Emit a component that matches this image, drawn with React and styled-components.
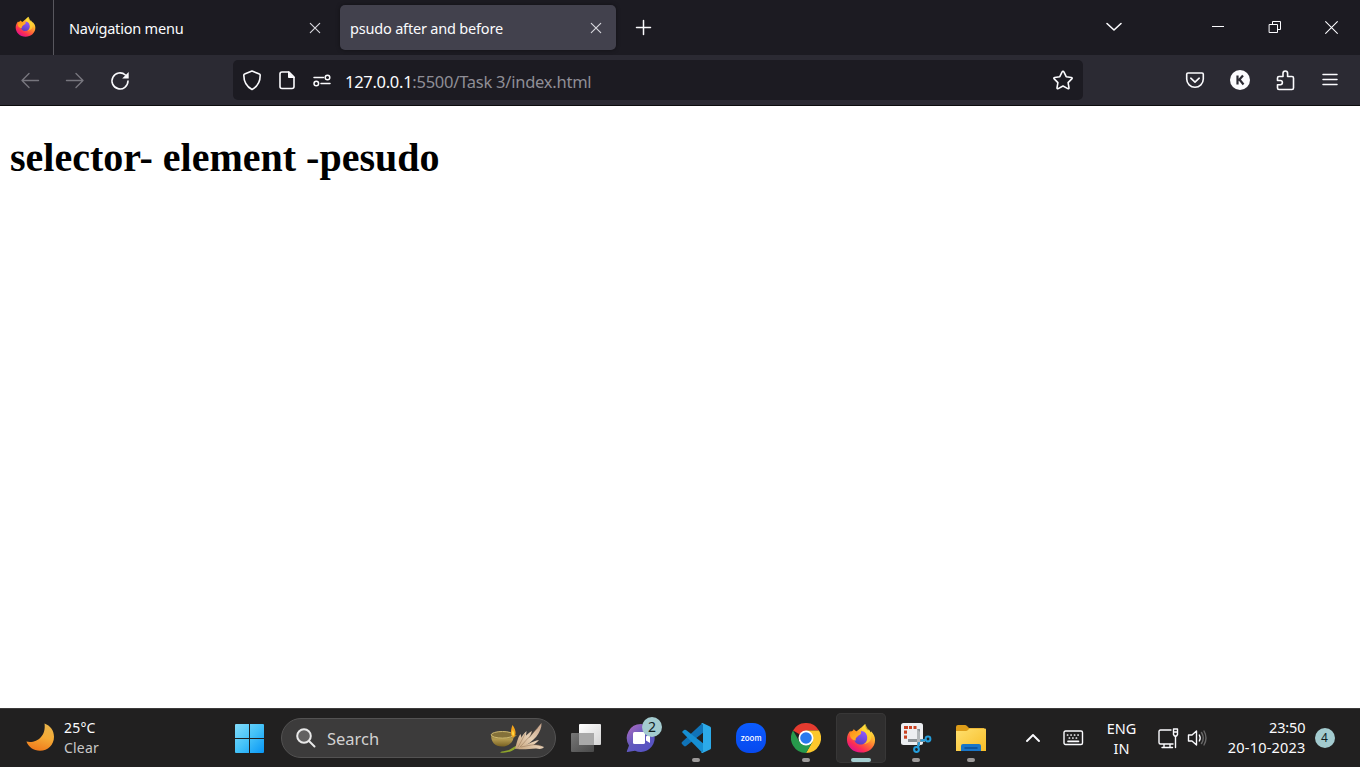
import React from "react";
import styled, { createGlobalStyle } from "styled-components";

const GlobalStyle = createGlobalStyle`
  * { box-sizing: border-box; }
  body {
    margin: 0;
    overflow: hidden;
    background: #fff;
    font-family: "Noto Sans", "Open Sans", sans-serif;
  }
  svg { display: block; flex: none; }
`;

const Screen = styled.div`
  display: flex;
  flex-direction: column;
  width: 1360px;
  height: 767px;
`;

const Label = styled.span`
  font-size: ${(p) => p.$size}px;
  line-height: ${(p) => p.$line || 20}px;
  letter-spacing: ${(p) => p.$track || 0}px;
  color: ${(p) => p.$color || "#fbfbfe"};
  white-space: pre;
`;

/* Browser chrome */
const TabStrip = styled.div`
  display: flex;
  flex: none;
  height: 55px;
  background: #1c1b22;
`;

const PinnedCell = styled.div`
  width: 54px;
  padding: 16px 0 0 15px;
  border-right: 1px solid #58575e;
`;

const Tab = styled.div`
  display: flex;
  align-items: center;
  justify-content: space-between;
  width: ${(p) => (p.$active ? 276 : 286)}px;
  height: 45px;
  margin-top: 5px;
  padding: ${(p) => (p.$active ? "0 14px 0 10px" : "0 19px 0 15px")};
  border-radius: 5px;
  background: ${(p) => (p.$active ? "#42414d" : "transparent")};
  box-shadow: ${(p) => (p.$active ? "0 0 4px rgba(0, 0, 0, 0.4)" : "none")};
`;

const NewTab = styled.div`
  padding: 19px 0 0 19px;
`;

const TabListButton = styled.div`
  display: flex;
  justify-content: center;
  width: 50px;
  margin: 17px 50px 0 auto;
`;

const WindowButton = styled.div`
  display: flex;
  justify-content: center;
  width: 57px;
  padding-top: 20px;
`;

const NavBar = styled.div`
  display: flex;
  flex: none;
  height: 51px;
  padding: 5px 7.5px;
  background: #2b2a33;
  border-bottom: 1px solid #0c0c0d;
`;

const NavButton = styled.div`
  display: flex;
  align-items: center;
  justify-content: center;
  width: 45px;
  height: 40px;
`;

const AddressBar = styled.div`
  display: flex;
  align-items: center;
  width: 850px;
  height: 40px;
  margin: 0 89.5px 0 90.5px;
  padding: 0 8px;
  border-radius: 5px;
  background: #1c1b22;
`;

const AddressIcons = styled.div`
  display: flex;
  gap: 11px;
  margin-right: 7px;
  padding-right: 4px;
  margin-left: -1px;
`;

const AddressText = styled.div`
  flex: 1;
  padding-top: 3px;
  line-height: 24px;
`;

const Page = styled.main`
  flex: 1;
  padding: 27px 10px 0;
  background: #fff;
`;

const Heading = styled.h1`
  margin: 0;
  font: bold 40px/50px "Liberation Serif", serif;
  color: #000;
  white-space: nowrap;
`;

/* Desktop taskbar */
const Taskbar = styled.footer`
  display: flex;
  flex: none;
  height: 59px;
  background: #212020;
  border-top: 1px solid #3c3b3b;
`;

const Weather = styled.div`
  display: flex;
  gap: 10px;
  width: 209px;
  padding: 9px 0 0 26px;
`;

const Lines = styled.div`
  display: flex;
  flex-direction: column;
  align-items: ${(p) => p.$align || "flex-start"};
`;

const MoonSlot = styled.div`
  padding-top: 5px;
`;

const StartButton = styled.div`
  width: 72px;
  padding: 15px 0 0 26px;
`;

const SearchBox = styled.div`
  display: flex;
  align-items: center;
  width: 275px;
  height: 40px;
  margin: 9px 2.5px 0 0;
  padding: 0 9px 0 14px;
  border: 1px solid #535252;
  border-radius: 20px;
  background: #3c3b3b;
`;

const SearchLabel = styled.div`
  flex: 1;
  padding: 2px 0 0 11px;
`;

const AppCell = styled.div`
  display: flex;
  justify-content: center;
  width: 55px;
  padding-top: 4px;
`;

const AppTile = styled.div`
  position: relative;
  display: flex;
  flex-direction: column;
  align-items: center;
  justify-content: space-between;
  width: 50px;
  height: 50px;
  padding: 0 0 1px;
  border-radius: 5px;
  background: ${(p) => (p.$active ? "#2f2e2e" : "transparent")};
  box-shadow: ${(p) => (p.$active ? "inset 0 0 0 1px #383737" : "none")};
`;

const AppGlyph = styled.div`
  display: flex;
  align-items: center;
  height: 32px;
  margin-top: 9px;
`;

const Indicator = styled.div`
  width: ${(p) => (p.$active ? 20 : 8)}px;
  height: 4px;
  border-radius: 2px;
  background: ${(p) => (p.$active ? "#a4cdd0" : "#9c9998")};
`;

const Count = styled.span`
  display: flex;
  align-items: center;
  justify-content: center;
  width: 20px;
  height: 20px;
  border-radius: 50%;
  background: #a3cbcf;
  color: #101c1e;
  font-size: ${(p) => p.$size || 14}px;
  line-height: 20px;
`;

const FloatingCount = styled(Count)`
  position: absolute;
  top: 4px;
  right: 4px;
`;

const Tray = styled.div`
  display: flex;
  flex: 1;
  padding-left: 27px;
`;

const TraySlot = styled.div`
  flex: none;
  width: ${(p) => p.$width}px;
  padding-top: ${(p) => p.$top}px;
`;

const Language = styled(Lines)`
  flex: none;
  width: 60px;
  margin-right: 6px;
  padding-top: 9px;
`;

const Clock = styled(Lines)`
  flex: none;
  width: 90px;
  margin-right: 9px;
  padding-top: 8px;
`;

function Icon({ w, h = w, box, children, ...rest }) {
  return (
    <svg width={w} height={h} viewBox={box || `0 0 ${w} ${h}`} fill="none" stroke="#fbfbfe" strokeWidth="1.6" strokeLinecap="round" strokeLinejoin="round" {...rest}>
      {children}
    </svg>
  );
}

function FirefoxLogo({ size, id }) {
  return (
    <Icon w={size} box="0 0 32 32" stroke="none">
      <defs>
        <linearGradient id={`${id}body`} x1="25" y1="3" x2="8" y2="29" gradientUnits="userSpaceOnUse">
          <stop stopColor="#fff44f" />
          <stop offset=".3" stopColor="#ffb82e" />
          <stop offset=".58" stopColor="#ff6b36" />
          <stop offset=".82" stopColor="#fb2c56" />
          <stop offset="1" stopColor="#e31587" />
        </linearGradient>
        <linearGradient id={`${id}globe`} x1="19" y1="9" x2="14" y2="23" gradientUnits="userSpaceOnUse">
          <stop stopColor="#9059ff" />
          <stop offset="1" stopColor="#5b3fbf" />
        </linearGradient>
        <linearGradient id={`${id}fox`} x1="5" y1="7" x2="17" y2="20" gradientUnits="userSpaceOnUse">
          <stop stopColor="#ff8a16" />
          <stop offset=".55" stopColor="#ffac24" />
          <stop offset="1" stopColor="#ff5a35" />
        </linearGradient>
      </defs>
      <path d="M20.500 1c-.3 3.600 1 5.300 3.100 7.200l.5-1.600c1.100 1 1.700 2.300 2 3.600l.6-1.300C29.300 11.700 31 14.500 31 18c0 8-6.600 13.500-15 13.500S1 25.300 1 17.500c0-4 1.500-7 3.600-9.300.2 1.200.4 1.600.8 2.200L8.500 8l1.700 2c4.200-4.200 6.800-5.300 10.300-9z" fill={`url(#${id}body)`} />
      <path d="M16 8.500c4.500 0 6.700 3.300 6.700 7.200 0 4.500-3 7.300-7 7.300-4.200 0-7.200-3-7-6.500 3-.5 4.300-2.200 5-4 1.800-.6 2.800-1.600 2.300-4z" fill={`url(#${id}globe)`} />
      <path d="M4.800 9c2 0 3-.9 3.500-2.500 1 1.600 2.400 2.700 4.600 3 1 .2 2.100 0 3.300.7-.2 2.100-1.700 2.900-3.800 3.500-1.500 1.500-2.600 3-1.800 5-3-.5-5.500-2-6.200-4.700-.3-1.500-.3-3.500.4-5z" fill={`url(#${id}fox)`} />
      <path d="M17 8.200c3 0 5.700 3.800 5.700 7.500 0 3.300-1.400 5.500-3.600 6.800 5.600-.6 8.500-4.300 7.800-9.400C26.500 10 22.500 6 20.500 1 17.300 3.300 16 5.700 17 8.200z" fill="#ffda35" opacity=".72" />
    </Icon>
  );
}

const CloseIcon = ({ size = 12, color = "#d8d8de", weight = 1.15 }) => (
  <Icon w={size} box="0 0 12 12" stroke={color} strokeWidth={weight}>
    <path d="M1.300 1.300l9.400 9.400M10.700 1.300l-9.400 9.400" />
  </Icon>
);

const MoonIcon = () => (
  <Icon w={28} stroke="none">
    <defs>
      <linearGradient id="moon" x1="20" y1="0" x2="12" y2="28" gradientUnits="userSpaceOnUse">
        <stop stopColor="#e9b54c" />
        <stop offset=".5" stopColor="#f5aa35" />
        <stop offset="1" stopColor="#ef7a1c" />
      </linearGradient>
    </defs>
    <path d="M18.500.5C24.300 2.600 28 7.500 28 13.700 28 21.800 22 27.800 14 27.800 7.500 27.800 2.500 24.200.4 18.600c9.700 2.300 20-5 18.100-18.100z" fill="url(#moon)" />
  </Icon>
);

const WindowsLogo = () => (
  <Icon w={30} stroke="none">
    <defs>
      <linearGradient id="win" x1="0" y1="0" x2="29" y2="29" gradientUnits="userSpaceOnUse">
        <stop stopColor="#83dcfb" />
        <stop offset=".5" stopColor="#44c2f8" />
        <stop offset="1" stopColor="#0896f5" />
      </linearGradient>
    </defs>
    <path d="M1 0h13v14H0V1q0-1 1-1zM15 0h13q1 0 1 1v13H15zM0 15h14v14H1q-1 0-1-1zM15 15h14v13q0 1-1 1H15z" fill="url(#win)" />
  </Icon>
);

const DiyaArt = () => (
  <Icon w={56} h={32} stroke="none">
    <defs>
      <linearGradient id="bowl" x1="0" y1="10" x2="0" y2="26" gradientUnits="userSpaceOnUse">
        <stop stopColor="#72602c" />
        <stop offset=".45" stopColor="#b49b50" />
        <stop offset="1" stopColor="#6c5518" />
      </linearGradient>
      <linearGradient id="husk" x1="28" y1="28" x2="52" y2="4" gradientUnits="userSpaceOnUse">
        <stop stopColor="#c6a47c" />
        <stop offset=".5" stopColor="#e6cfb4" />
        <stop offset="1" stopColor="#c7a58c" />
      </linearGradient>
    </defs>
    <path d="M1 13c0 7 4 11.500 11 11.500S22.500 20.500 23.500 16l3.500-3z" fill="url(#bowl)" />
    <ellipse cx="12.500" cy="12.800" rx="11.300" ry="3.300" fill="#84713a" stroke="#cdb86f" strokeWidth="1" />
    <path d="M22.500 3c-1.800 5-2.500 9.500.3 12.500 3.900-1.500 3.600-7-.3-12.500z" fill="#f3a31b" />
    <path d="M22.700 8c-1 3-.8 5 .5 6 1.500-1.200 1-3.500-.5-6z" fill="#ffdc43" />
    <path d="M10 30.500c2-1.500 5-1.200 8-2.200 4-1.400 6-4.300 11-5.300-5 6-11 8.500-19 7.500z" fill="#8fa62b" />
    <g fill="url(#husk)">
      <path d="M25 27c2-7 2.500-11 5.500-15 1.500 4 1 8-2.500 14z" />
      <path d="M26 27c3-7 5-13 10.500-18-.3 7-2.500 12-7.500 17z" />
      <path d="M27 27c4-8 8-14 15-18-2 7-6 13-12 17z" />
      <path d="M28 26c9-6 15-15 23.500-25C52 10 44 20 31 26z" />
      <path d="M28 26c7-2 14-7 21-8-4 5-10 8-19 8.500z" />
      <path d="M27 27c8-4 18-6 27-2-2 2.500-5 2-8 1.500-6 0-12 1.500-19 .5z" />
    </g>
    <path d="M28 25c3-5 5-9 7-13M30 25c5-5 10-12 18-19M31 25c7-1 14-4 20-1" stroke="#8e6e50" strokeWidth=".5" />
  </Icon>
);

const TaskViewIcon = () => (
  <Icon w={32} h={30} stroke="none">
    <defs>
      <linearGradient id="tvf" x2="1" y2="1"><stop stopColor="#fff" /><stop offset="1" stopColor="#d4d4d4" /></linearGradient>
      <linearGradient id="tvb" x2="1" y2="1"><stop stopColor="#777" /><stop offset="1" stopColor="#494949" /></linearGradient>
    </defs>
    <rect x="1" y="10" width="23" height="19" rx="1" fill="url(#tvb)" />
    <rect x="9" y="1" width="22" height="21" rx="1" fill="url(#tvf)" />
    <path d="M9 10h15v12H9z" fill="#a9a9a9" />
  </Icon>
);

const ChatIcon = () => (
  <Icon w={30} stroke="none">
    <defs>
      <linearGradient id="chat" x1="4" y1="4" x2="24" y2="28" gradientUnits="userSpaceOnUse">
        <stop stopColor="#a267c0" /><stop offset=".45" stopColor="#6259bd" /><stop offset="1" stopColor="#5552c4" />
      </linearGradient>
    </defs>
    <path d="M15 1a14 14 0 1 1-6 26.800L1.500 29q-1 0-.5-1.200L3 22.500A14 14 0 0 1 15 1z" fill="url(#chat)" />
    <rect x="7" y="9" width="12" height="12" rx="1.500" fill="#fff" />
    <path d="M20 13.500l4-2.500v9l-4-2.500z" fill="#fff" />
  </Icon>
);

const CodeIcon = () => (
  <Icon w={32} h={32} stroke="none">
    <path d="M22.500 1L2 20q-1 1 0 2l2 2q1 .8 2 0L24 10z" fill="#1073b8" />
    <path d="M2 10l2-2q1-.7 2 0l18 14-1.500 9z" fill="#168fd3" />
    <path d="M22.500 1l7.500 3.500q1 .5 1 1.500v20q0 1-1 1.500L22.500 31q-.7.200-1.500-.7 2 0 2-2V3.700Q23 1.900 21.200 1.800 22 .8 22.500 1z" fill="#2caae9" />
  </Icon>
);

const ZoomBubble = styled.div`
  display: flex;
  align-items: center;
  justify-content: center;
  width: 30px;
  height: 30px;
  border-radius: 13px;
  background: linear-gradient(#0b5cff, #0749ee);
  color: #fff;
  font: 500 8px/10px "Inter", sans-serif;
`;

const ChromeIcon = () => (
  <Icon w={30} stroke="none">
    <path d="M15 15L2 7.500A15 15 0 0 1 28 7.500H15z" fill="#e53b2f" />
    <path d="M15 15V7.500h13A15 15 0 0 1 15 30l6.500-11.200z" fill="#fcc72c" />
    <path d="M15 15l6.500 3.800L15 30A15 15 0 0 1 2 7.500l6.500 11.300z" fill="#279a4c" />
    <circle cx="15" cy="15" r="7.500" fill="#fff" />
    <circle cx="15" cy="15" r="5.800" fill="#2879ee" />
  </Icon>
);

const SnipIcon = () => (
  <Icon w={32} h={32} stroke="none">
    <rect x="1" y="1" width="22" height="22" rx="2.500" fill="#eceef1" />
    <g fill="#c94223">
      <rect x="4" y="4" width="4" height="3" />
      <rect x="9" y="4" width="3" height="3" />
      <rect x="13.500" y="4" width="3" height="3" />
      <rect x="4" y="8.500" width="3" height="3.200" />
      <rect x="4" y="13.500" width="3" height="3.200" />
    </g>
    <path d="M18.500 7v17M8 18.500h17" stroke="#8c9296" strokeWidth="3" strokeLinecap="butt" />
    <path d="M17 7l3 3v10h-3z" fill="#b3b8bb" />
    <circle cx="16.500" cy="27.500" r="2.400" stroke="#249edc" strokeWidth="2" />
    <circle cx="28" cy="17" r="2.400" stroke="#249edc" strokeWidth="2" />
    <path d="M18 25.500l1-4.500M25.500 18l-4 .6" stroke="#249edc" strokeWidth="2" />
  </Icon>
);

const FolderIcon = () => (
  <Icon w={32} h={30} stroke="none">
    <defs><linearGradient id="folder" x2="1" y2="1"><stop stopColor="#ffe06f" /><stop offset="1" stopColor="#f7bd27" /></linearGradient></defs>
    <path d="M1 4q0-2 2-2h7q1 0 2 1l2 2h15v10H1z" fill="#dd9c18" />
    <path d="M1 8h10q1 0 2-1l1.500-1.500H30q1 0 1 1V28H1z" fill="url(#folder)" />
    <path d="M6 28v-5q0-2 2-2h16q2 0 2 2v5z" fill="#1976c8" />
    <path d="M10 25h12" stroke="#0b4c91" strokeWidth="1.500" />
  </Icon>
);

function TaskbarApp({ children, badge, running, active }) {
  return (
    <AppCell>
      <AppTile $active={active}>
        <AppGlyph>{children}</AppGlyph>
        {badge && <FloatingCount>{badge}</FloatingCount>}
        {running && <Indicator $active={active} />}
      </AppTile>
    </AppCell>
  );
}

export default function App() {
  return (
    <Screen>
      <GlobalStyle />
      <TabStrip>
        <PinnedCell><FirefoxLogo size={21} id="a" /></PinnedCell>
        <Tab>
          <Label $size={14.5} $track={-0.2}>Navigation menu</Label>
          <CloseIcon />
        </Tab>
        <Tab $active>
          <Label $size={14.5} $track={-0.19}>psudo after and before</Label>
          <CloseIcon />
        </Tab>
        <NewTab>
          <Icon w={17} strokeWidth="1.500"><path d="M8.500 1.500v14M1.500 8.500h14" /></Icon>
        </NewTab>
        <TabListButton>
          <Icon w={20}><path d="M3 6.500l7 6.500 7-6.500" /></Icon>
        </TabListButton>
        <WindowButton>
          <Icon w={13} strokeWidth="1" strokeLinecap="butt"><path d="M1 6.500h12" /></Icon>
        </WindowButton>
        <WindowButton>
          <Icon w={13} strokeWidth="1" strokeLinejoin="miter"><path d="M1.500 4.500h8v8h-8zM4.500 4V1.500h8v8H10" /></Icon>
        </WindowButton>
        <WindowButton><CloseIcon size={15} color="#fbfbfe" weight={0.85} /></WindowButton>
      </TabStrip>

      <NavBar>
        <NavButton>
          <Icon w={24} stroke="#77767e" strokeWidth="1.400"><path d="M20.500 12.500H4M11 5.500l-7 7 7 7" /></Icon>
        </NavButton>
        <NavButton>
          <Icon w={24} stroke="#77767e" strokeWidth="1.400"><path d="M3.500 12.500H20M13 5.500l7 7-7 7" /></Icon>
        </NavButton>
        <NavButton>
          <Icon w={24}>
            <path d="M20 13a8 8 0 1 1-2.600-6" strokeWidth="1.600" />
            <path d="M20.700 4v6.500h-6.500z" fill="#fbfbfe" stroke="none" />
          </Icon>
        </NavButton>
        <AddressBar>
          <AddressIcons>
            <Icon w={24}><path d="M12 3l7.400 3q.8.300.8 1.200c0 6.500-2.200 11-8.200 14.300C6 18.200 3.800 13.700 3.800 7.200q0-.9.800-1.200z" /></Icon>
            <Icon w={24}><path d="M7 4h7l5 5v9.500q0 2-2 2H7q-2 0-2-2V6q0-2 2-2z" /><path d="M13.500 4v5.500H19z" fill="#fbfbfe" strokeWidth="1" /></Icon>
            <Icon w={24} strokeWidth="1.500"><path d="M4 9.500h9.500M20 15.500h-9" /><circle cx="17.500" cy="9.500" r="2.300" /><circle cx="6.300" cy="15.500" r="2.300" /></Icon>
          </AddressIcons>
          <AddressText>
            <Label $size={16.5} $track={-0.29}>127.0.0.1</Label>
            <Label $size={16.5} $track={-0.24} $color="#8f8e96">:5500/Task 3/index.html</Label>
          </AddressText>
          <Icon w={24}>
            <path d="M12 3.200q.6 0 .9.700l2.300 4.800 5.200.8q1.400.3.400 1.400l-3.700 3.700.9 5.200q.1 1.400-1.200.8L12 18l-4.800 2.600q-1.300.6-1.200-.8l.9-5.200-3.700-3.700q-1-1.100.4-1.400l5.200-.8 2.300-4.800q.3-.7.900-.7z" />
          </Icon>
        </AddressBar>
        <NavButton>
          <Icon w={24}><path d="M5 5h14q1.300 0 1.300 1.300v4.700a8.300 8.300 0 0 1-16.600 0V6.300Q3.700 5 5 5zM7.800 10.200l4.200 4 4.200-4" /></Icon>
        </NavButton>
        <NavButton>
          <Icon w={24} stroke="none"><circle cx="12" cy="12" r="10" fill="#fbfbfe" /><path d="M9.500 7.500v9M15 7.500l-4.500 5M11.500 11.500l4 5" stroke="#2b2a33" strokeWidth="2.200" strokeLinecap="butt" /></Icon>
        </NavButton>
        <NavButton>
          <Icon w={24}><path d="M6 8.500h4V5.300a2.300 2.300 0 0 1 4.600 0v3.200h4.400q1.500 0 1.500 1.500v10q0 1.500-1.500 1.500H6q-1.500 0-1.500-1.500v-3.300h2.800a2.100 2.100 0 0 0 0-4.200H4.500V10Q4.500 8.500 6 8.500z" /></Icon>
        </NavButton>
        <NavButton>
          <Icon w={24} strokeWidth="1.500"><path d="M5 6.500h14M5 11.500h14M5 16.500h14" /></Icon>
        </NavButton>
      </NavBar>

      <Page><Heading>selector- element -pesudo</Heading></Page>

      <Taskbar>
        <Weather>
          <MoonSlot><MoonIcon /></MoonSlot>
          <Lines>
            <Label $size={14} $track={0.2}>25°C</Label>
            <Label $size={14} $track={0.2} $color="#c9c8c8">Clear</Label>
          </Lines>
        </Weather>
        <StartButton><WindowsLogo /></StartButton>
        <SearchBox>
          <Icon w={20} stroke="#e9e9e9" strokeWidth="2"><circle cx="8" cy="8" r="6.800" fill="#626161" /><path d="M13 13l5.500 5.500" /></Icon>
          <SearchLabel><Label $size={16.5} $color="#d2d1d1">Search</Label></SearchLabel>
          <DiyaArt />
        </SearchBox>
        <TaskbarApp><TaskViewIcon /></TaskbarApp>
        <TaskbarApp badge="2"><ChatIcon /></TaskbarApp>
        <TaskbarApp running><CodeIcon /></TaskbarApp>
        <TaskbarApp><ZoomBubble>zoom</ZoomBubble></TaskbarApp>
        <TaskbarApp running><ChromeIcon /></TaskbarApp>
        <TaskbarApp running active><FirefoxLogo size={30} id="b" /></TaskbarApp>
        <TaskbarApp running><SnipIcon /></TaskbarApp>
        <TaskbarApp running><FolderIcon /></TaskbarApp>
        <Tray>
          <TraySlot $width={37} $top={24}>
            <Icon w={14} h={10} strokeWidth="1.900"><path d="M1 8l6-6 6 6" /></Icon>
          </TraySlot>
          <TraySlot $width={29} $top={21}>
            <Icon w={21} h={16} strokeWidth="1.400">
              <rect x="1" y="1" width="18.500" height="13.500" rx="1.500" />
              <path d="M4.500 5h.2M8 5h.2M11.500 5h.2M15 5h.2M6.300 8h.2M9.800 8h.2M13.300 8h.2M5 11.300h10.500" strokeWidth="1.700" />
            </Icon>
          </TraySlot>
          <Language $align="center">
            <Label $size={14.5}>ENG</Label>
            <Label $size={14.5}>IN</Label>
          </Language>
          <TraySlot $width={29} $top={19}>
            <Icon w={21} h={21} strokeWidth="1.400">
              <path d="M13 2H2.500Q1 2 1 3.500v11Q1 16 2.500 16H15M6 16v3.500M12 16v3.500M4 19.500h10.500" />
              <path d="M15.500 1h4v5.500l-1 1.500h-2l-1-1.500zM15.500 4h4M17.500 8v11.500" />
            </Icon>
          </TraySlot>
          <TraySlot $width={29} $top={19}>
            <Icon w={21} h={20} strokeWidth="1.400">
              <path d="M1.500 7H5l4.500-4v14L5 13H1.500z" /><path d="M12.300 7q1.800 3 0 6" />
              <path d="M14.500 4.500q3.500 5.500 0 11M17 3q4 7 0 14" stroke="#686767" />
            </Icon>
          </TraySlot>
          <Clock $align="flex-end">
            <Label $size={14.5} $track={-0.1}>23:50</Label>
            <Label $size={14.5} $track={0.2}>20-10-2023</Label>
          </Clock>
          <TraySlot $width={20} $top={19}><Count $size={12}>4</Count></TraySlot>
        </Tray>
      </Taskbar>
    </Screen>
  );
}
